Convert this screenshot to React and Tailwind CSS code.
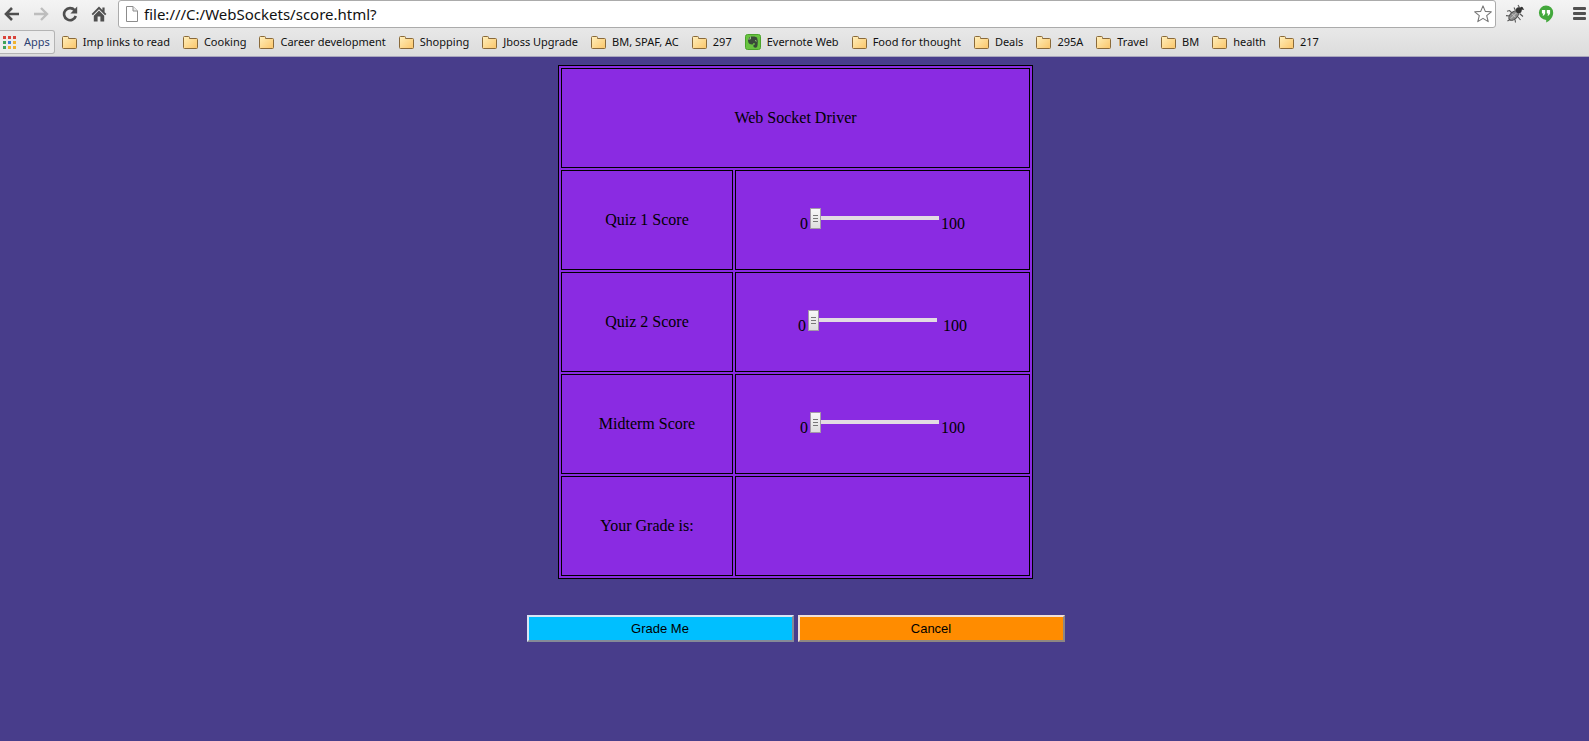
import { useId, useState } from "react";

const BOOKMARKS = [
  "Imp links to read",
  "Cooking",
  "Career development",
  "Shopping",
  "Jboss Upgrade",
  "BM, SPAF, AC",
  "297",
  "Evernote Web",
  "Food for thought",
  "Deals",
  "295A",
  "Travel",
  "BM",
  "health",
  "217",
];

const APP_COLORS = [
  "#d9443b", "#d9443b", "#d9443b",
  "#3fa35b", "#3b7ddb", "#f0b32e",
  "#3fa35b", "#f0b32e", "#f0b32e",
];

function BackIcon() {
  return (
    <svg width="16" height="14" viewBox="0 0 16 14" fill="none" stroke="currentColor" strokeWidth="2.6" aria-hidden="true">
      <path d="M8 1 L2 7 L8 13 M2 7 H15" />
    </svg>
  );
}

function ForwardIcon() {
  return (
    <svg width="16" height="14" viewBox="0 0 16 14" fill="none" stroke="currentColor" strokeWidth="2.4" aria-hidden="true">
      <path d="M8 1 L14 7 L8 13 M14 7 H1" />
    </svg>
  );
}

function ReloadIcon() {
  return (
    <svg width="16" height="16" viewBox="0 0 16 16" aria-hidden="true">
      <path d="M12.6 4.2 A6 6 0 1 0 13.8 10" fill="none" stroke="currentColor" strokeWidth="2.6" />
      <path d="M15.2 0.6 V7.4 H8.4 Z" fill="currentColor" />
    </svg>
  );
}

function HomeIcon() {
  return (
    <svg width="16" height="16" viewBox="0 0 16 16" fill="currentColor" aria-hidden="true">
      <path d="M8 0.5 L0.6 8 L1.9 9.3 L8 3.2 L14.1 9.3 L15.4 8 L13.6 6.2 V1.5 H11.4 V4 Z" />
      <path d="M8 4.6 L2.8 9.8 V15.5 H6.6 V10.5 H9.4 V15.5 H13.2 V9.8 Z" />
    </svg>
  );
}

function PageIcon() {
  return (
    <svg width="12" height="16" viewBox="0 0 12 16" fill="#fff" stroke="#8c8c8c" aria-hidden="true">
      <path d="M0.5 0.5 H7 L11.5 5 V15.5 H0.5 Z" />
      <path d="M7 0.5 V5 H11.5" fill="#eee" />
    </svg>
  );
}

function StarIcon() {
  return (
    <svg width="18" height="18" viewBox="0 0 18 18" fill="#fff" stroke="#777" strokeWidth="1.1" strokeLinejoin="round" aria-hidden="true">
      <path d="M9 0.9 L11.3 6.4 L17.3 6.8 L12.7 10.7 L14.2 16.6 L9 13.4 L3.8 16.6 L5.3 10.7 L0.7 6.8 L6.7 6.4 Z" />
    </svg>
  );
}

function BugIcon() {
  return (
    <svg width="20" height="20" viewBox="0 0 20 20" fill="none" aria-hidden="true">
      <path
        d="M7 9 L4.5 6.5 L2 7.2 M5 12 L1 11.6 M6.5 14.5 L2.5 17 M10 15.5 L10.5 18.5 M13 13 L15.5 16 M14.5 9.5 L18 12.5 M10.5 6.5 L9 3.5 M16 4.5 L19 5.5 M14.5 3.5 L13 1"
        stroke="#555" strokeWidth="1.1"
      />
      <ellipse cx="8.7" cy="11.6" rx="5.8" ry="3.5" transform="rotate(-43 8.7 11.6)" fill="#8b8b8b" stroke="#4c4c4c" />
      <path d="M5.8 14.6 L11.6 8.8 M7.2 9.8 L10.4 13.2" stroke="#c9c9c9" />
      <circle cx="13.8" cy="6.2" r="2.9" fill="#333" />
      <circle cx="16.6" cy="4.2" r="1.5" fill="#333" />
    </svg>
  );
}

function HangoutsIcon() {
  return (
    <svg width="16" height="18" viewBox="0 0 16 18" aria-hidden="true">
      <path d="M8 0.5 A7.2 7.2 0 0 1 15.2 7.7 C15.2 12 12 15.7 8.2 17.6 V14.9 A7.2 7.2 0 0 1 8 0.5 Z" fill="#43a83c" />
      <path d="M3.9 5 H7.2 V8.4 L5.9 10.6 H4.5 L5.4 8.4 H3.9 Z M8.8 5 H12.1 V8.4 L10.8 10.6 H9.4 L10.3 8.4 H8.8 Z" fill="#fff" />
    </svg>
  );
}

function MenuIcon() {
  return (
    <svg width="13" height="14" viewBox="0 0 13 14" fill="#505050" aria-hidden="true">
      <rect width="13" height="3" y="0" rx="1" />
      <rect width="13" height="3" y="5" rx="1" />
      <rect width="13" height="3" y="10" rx="1" />
    </svg>
  );
}

function AppsIcon() {
  return (
    <svg width="13" height="13" viewBox="0 0 13 13" aria-hidden="true">
      {APP_COLORS.map((color, i) => (
        <rect key={i} x={(i % 3) * 5} y={Math.floor(i / 3) * 5} width="3" height="3" fill={color} />
      ))}
    </svg>
  );
}

function FolderIcon() {
  return (
    <svg className="shrink-0" width="15" height="13" viewBox="0 0 15 13" aria-hidden="true">
      <defs>
        <linearGradient id="folder" x1="0" y1="0" x2="1" y2="1">
          <stop offset="0" stopColor="#fff0bd" />
          <stop offset="1" stopColor="#fbc569" />
        </linearGradient>
      </defs>
      <path
        d="M0.5 11.5 V1.5 Q0.5 0.5 1.5 0.5 H5.5 Q6.5 0.5 6.5 1.5 V2.5 H13.5 Q14.5 2.5 14.5 3.5 V11.5 Q14.5 12.5 13.5 12.5 H1.5 Q0.5 12.5 0.5 11.5 Z"
        fill="url(#folder)" stroke="#8a6a3a"
      />
    </svg>
  );
}

function EvernoteIcon() {
  return (
    <svg className="shrink-0" width="16" height="16" viewBox="0 0 16 16" aria-hidden="true">
      <rect x="0.5" y="0.5" width="15" height="15" rx="2" fill="#68c440" stroke="#4ba32c" />
      <path d="M3 5 L5.5 2.5 H9.5 L12 3.6 Q13.2 6.5 12.6 10.5 Q12.4 13.8 10.5 13.8 Q8.3 13.8 8.3 12 Q8.3 10.6 10 10.6 V9.6 L8.6 9 L7.6 10.4 Q4.3 10.6 3.6 9 Q2.8 7 3 5 Z" fill="#3a4a3a" />
      <path d="M3 5 H5.5 V2.5" fill="none" stroke="#a9d99a" strokeWidth="0.8" />
      <path d="M10 6.8 Q11 6.3 11.6 7.2" fill="none" stroke="#9ad88a" />
    </svg>
  );
}

function BrowserBar() {
  const [url, setUrl] = useState("file:///C:/WebSockets/score.html?");
  return (
    <header className="border-b border-[#a9a6bd] bg-linear-to-b from-[#f4f4f4] to-[#dcdcdc] font-['Noto_Sans','Open_Sans',sans-serif]">
      <div className="flex h-7 items-center pr-[3px] text-[#4f4f4f]">
        <nav className="flex w-[118px] shrink-0 items-center justify-between pr-[11px] pl-1" aria-label="Navigation">
          <button aria-label="Back"><BackIcon /></button>
          <button aria-label="Forward" className="text-[#bdbdbd]"><ForwardIcon /></button>
          <button aria-label="Reload"><ReloadIcon /></button>
          <button aria-label="Home"><HomeIcon /></button>
        </nav>
        <div className="flex h-full min-w-0 flex-1 items-center gap-[6px] rounded-[3px] border border-[#ababab] bg-white pr-[3px] pl-[7px]">
          <PageIcon />
          <input
            aria-label="Address"
            className="min-w-0 flex-1 bg-transparent text-[15px] leading-5 text-[#111] outline-none"
            value={url}
            onChange={(e) => setUrl(e.target.value)}
          />
          <button aria-label="Bookmark this page"><StarIcon /></button>
        </div>
        <div className="flex shrink-0 items-center pl-[9px]">
          <button aria-label="Debugger"><BugIcon /></button>
          <button aria-label="Hangouts" className="ml-[13px]"><HangoutsIcon /></button>
          <button aria-label="Menu" className="ml-[19px]"><MenuIcon /></button>
        </div>
      </div>
      <nav className="flex h-7 items-center gap-[13px] text-[11px] leading-4 whitespace-nowrap text-[#111]" aria-label="Bookmarks">
        <a href="#apps" className="-mr-[6px] flex h-6 items-center gap-2 rounded-r-[3px] border border-l-0 border-[#b4b4b4] bg-[#ececec] pr-1 pl-[3px] text-[#2e4272]">
          <AppsIcon />
          Apps
        </a>
        {BOOKMARKS.map((name) => (
          <a key={name} href="#bookmark" className="flex items-center gap-[6px]">
            {name === "Evernote Web" ? <EvernoteIcon /> : <FolderIcon />}
            {name}
          </a>
        ))}
      </nav>
    </header>
  );
}

function ScoreRow({ label, spaced }) {
  const id = useId();
  const [value, setValue] = useState(0);
  return (
    <tr className="h-[100px]">
      <td className="border border-black">
        <label htmlFor={id}>{label}</label>
      </td>
      <td className="border border-black">
        0
        <input
          id={id}
          type="range"
          min="0"
          max="100"
          value={value}
          onChange={(e) => setValue(Number(e.target.value))}
          className="mx-[2px] inline-block h-[21px] w-[129px] appearance-none bg-[linear-gradient(#e3dbe3,#e3dbe3)] bg-[length:100%_4px] bg-[position:0_8px] bg-no-repeat align-baseline [&::-webkit-slider-thumb]:h-[21px] [&::-webkit-slider-thumb]:w-[11px] [&::-webkit-slider-thumb]:appearance-none [&::-webkit-slider-thumb]:border [&::-webkit-slider-thumb]:border-[#a49aa8] [&::-webkit-slider-thumb]:bg-[linear-gradient(#777,#777),linear-gradient(#777,#777),linear-gradient(#777,#777),linear-gradient(#f8f8f8,#dedede)] [&::-webkit-slider-thumb]:bg-[length:5px_1px,5px_1px,5px_1px,100%_100%] [&::-webkit-slider-thumb]:bg-[position:2px_6px,2px_9px,2px_12px,0_0] [&::-webkit-slider-thumb]:bg-no-repeat"
        />
        {spaced ? " 100" : "100"}
      </td>
    </tr>
  );
}

export default function App() {
  return (
    <div className="min-h-screen bg-[#483d8b]">
      <BrowserBar />
      <main className="pt-2 pr-2 pl-2.5 font-['Liberation_Serif',serif] text-[16px] leading-[18px] text-black">
        <table className="mx-auto w-[475px] table-fixed border-separate border-spacing-[2px] border border-black bg-[#8a2be2] text-center">
          <colgroup>
            <col className="w-[172px]" />
            <col />
          </colgroup>
          <tbody>
            <tr className="h-[100px]">
              <th colSpan={2} className="border border-black font-normal">Web Socket Driver</th>
            </tr>
            <ScoreRow label="Quiz 1 Score" />
            <ScoreRow label="Quiz 2 Score" spaced />
            <ScoreRow label="Midterm Score" />
            <tr className="h-[100px]">
              <td className="border border-black">Your Grade is:</td>
              <td className="border border-black"></td>
            </tr>
          </tbody>
        </table>
        <div className="flex justify-center gap-1 pt-9 font-['Liberation_Sans',sans-serif] text-[13px] leading-4">
          <button className="h-[27px] w-[267px] border-2 border-t-[#d8e4f4] border-r-[#858a98] border-b-[#858a98] border-l-[#d8e4f4] bg-[#00bfff]">
            Grade Me
          </button>
          <button className="h-[27px] w-[267px] border-2 border-t-[#f0dfd8] border-r-[#8e8782] border-b-[#8e8782] border-l-[#f0dfd8] bg-[#ff8c00]">
            Cancel
          </button>
        </div>
      </main>
    </div>
  );
}
